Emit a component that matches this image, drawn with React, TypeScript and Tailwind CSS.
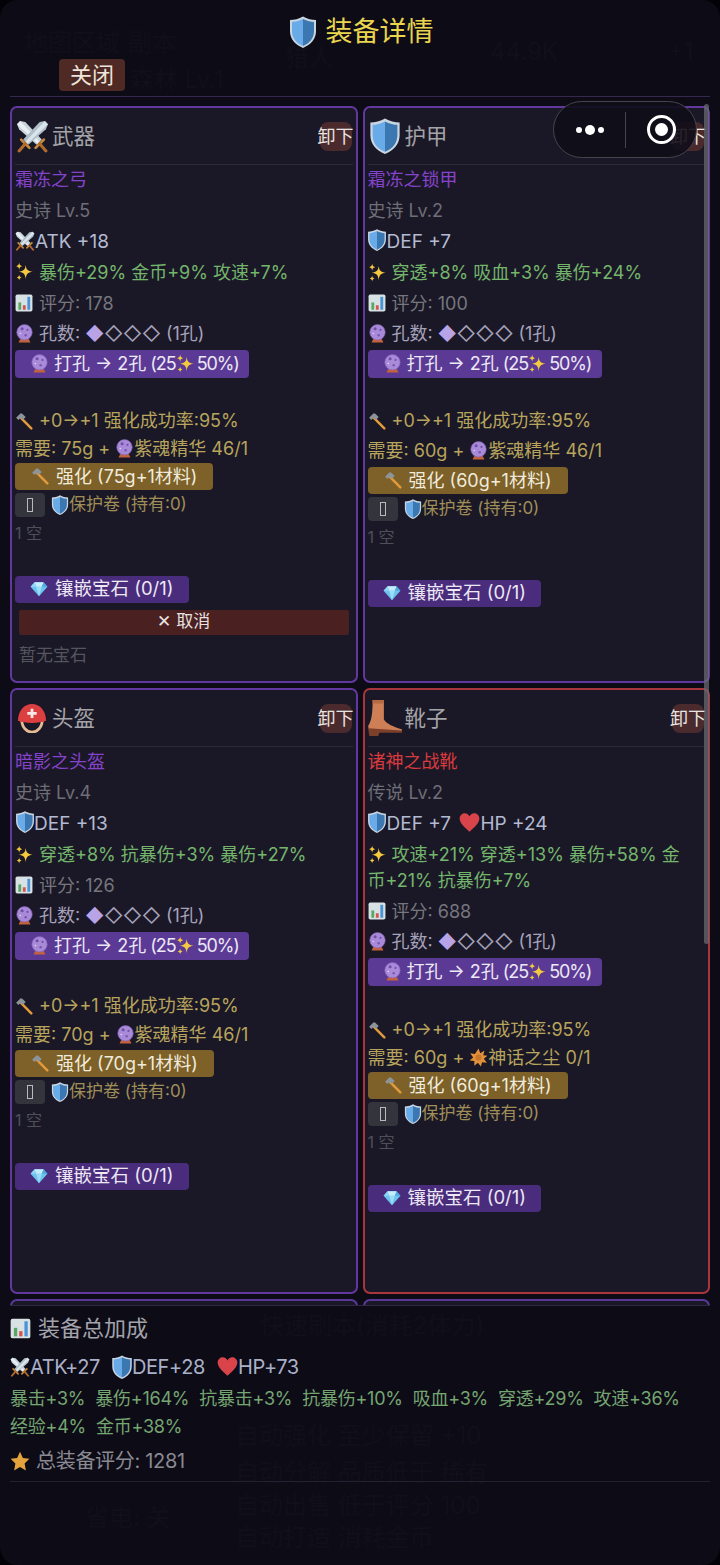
import React from "react";

type IP = { s?: number; className?: string };
const box = "inline-block align-[-0.15em] shrink-0";

const Swords = ({ s = 20, className = "" }: IP) => (
  <svg width={s} height={s} viewBox="0 0 32 32" className={`${box} ${className}`}>
    <path d="M1 4 L4 1 L9 2 L25 19 L20 24 L3 9 Z" fill="#c6d3dc" />
    <path d="M1 4 L4 1 L23 21 L21 23 Z" fill="#e8eef2" />
    <path d="M31 4 L28 1 L23 2 L7 19 L12 24 L29 9 Z" fill="#aebfca" />
    <path d="M31 4 L28 1 L9 21 L11 23 Z" fill="#dbe4ea" />
    <path d="M5 19 L13 27" stroke="#c98a3c" strokeWidth="2.6" strokeLinecap="round" />
    <path d="M27 19 L19 27" stroke="#c98a3c" strokeWidth="2.6" strokeLinecap="round" />
    <path d="M9 23 L3 30" stroke="#b06a2b" strokeWidth="3" strokeLinecap="round" />
    <path d="M23 23 L29 30" stroke="#b06a2b" strokeWidth="3" strokeLinecap="round" />
  </svg>
);
const Shield = ({ s = 20, className = "" }: IP) => (
  <svg width={s} height={s} viewBox="0 0 32 32" className={`${box} ${className}`}>
    <path d="M16 0.5 C20 3 25 4 29 4 L29 15 C29 23 24 28.5 16 32 C8 28.5 3 23 3 15 L3 4 C7 4 12 3 16 0.5 Z" fill="#c9d6e2" />
    <path d="M16 3 C12 5 8 6 5 6 L5 15 C5 22 9 27 16 30 Z" fill="#69aae8" />
    <path d="M16 3 C20 5 24 6 27 6 L27 15 C27 22 23 27 16 30 Z" fill="#3b77b0" />
  </svg>
);
const Sparkle = ({ s = 20, className = "" }: IP) => (
  <svg width={s} height={s} viewBox="0 0 32 32" className={`${box} ${className}`}>
    <path d="M18 5 C19 13 21 15 30 16.5 C21 18 19 20 18 29 C17 20 15 18 6 16.5 C15 15 17 13 18 5 Z" fill="#f5c93f" />
    <path d="M7 1 C7.6 5 8.5 6 12 7 C8.5 8 7.6 9 7 13 C6.4 9 5.5 8 2 7 C5.5 6 6.4 5 7 1 Z" fill="#f5c93f" />
    <path d="M7 21 C7.5 24 8.2 25 11 26 C8.2 27 7.5 28 7 31 C6.5 28 5.8 27 3 26 C5.8 25 6.5 24 7 21 Z" fill="#f5c93f" />
  </svg>
);
const Chart = ({ s = 20, className = "" }: IP) => (
  <svg width={s} height={s} viewBox="0 0 32 32" className={`${box} ${className}`}>
    <rect x="1" y="1" width="30" height="30" rx="3" fill="#d8e2e4" />
    <rect x="6" y="15" width="5" height="13" fill="#5aa765" />
    <rect x="14" y="20" width="5" height="8" fill="#d6544e" />
    <rect x="22" y="5" width="5" height="23" fill="#4a93d8" />
  </svg>
);
const Ball = ({ s = 20, className = "" }: IP) => (
  <svg width={s} height={s} viewBox="0 0 32 32" className={`${box} ${className}`}>
    <path d="M6 31 L26 31 L23 25 L9 25 Z" fill="#c4623a" />
    <circle cx="16" cy="14" r="13" fill="#a98ad8" />
    <circle cx="16" cy="14" r="13" fill="none" stroke="#7e5fb8" strokeWidth="1" />
    <circle cx="12" cy="8" r="2.6" fill="#6f4fa8" />
    <circle cx="21" cy="10" r="1.8" fill="#6f4fa8" />
    <circle cx="18" cy="19" r="2.2" fill="#7a5ab2" />
    <circle cx="9" cy="16" r="1.4" fill="#e0d4f2" />
  </svg>
);
const Hammer = ({ s = 20, className = "" }: IP) => (
  <svg width={s} height={s} viewBox="0 0 32 32" className={`${box} ${className}`}>
    <path d="M11 11 L29 29" stroke="#e39a3b" strokeWidth="4.4" strokeLinecap="round" />
    <path d="M2 10 L10 2 L13 3 L19 9 L14 14 L10 10 L6 14 Z" fill="#8b949b" />
  </svg>
);
const Gem = ({ s = 20, className = "" }: IP) => (
  <svg width={s} height={s} viewBox="0 0 32 32" className={`${box} ${className}`}>
    <path d="M8 4 L24 4 L31 12 L16 29 L1 12 Z" fill="#6cc3ef" />
    <path d="M8 4 L24 4 L21 12 L11 12 Z" fill="#c6ecfb" />
    <path d="M11 12 L21 12 L16 29 Z" fill="#9bdcf6" />
    <path d="M1 12 L8 4 L11 12 Z" fill="#90d6f5" />
    <path d="M31 12 L24 4 L21 12 Z" fill="#4fa9de" />
  </svg>
);
const Heart = ({ s = 20, className = "" }: IP) => (
  <svg width={s} height={s} viewBox="0 0 32 32" className={`${box} ${className}`}>
    <path d="M16 30 C8 23 1 17 1 10 C1 5 5 2 9 2 C12 2 15 4 16 7 C17 4 20 2 23 2 C27 2 31 5 31 10 C31 17 24 23 16 30 Z" fill="#d9434a" />
  </svg>
);
const Star = ({ s = 20, className = "" }: IP) => (
  <svg width={s} height={s} viewBox="0 0 32 32" className={`${box} ${className}`}>
    <path d="M16 1 L20.6 11 L31 12.4 L23.4 19.8 L25.4 31 L16 25.4 L6.6 31 L8.6 19.8 L1 12.4 L11.4 11 Z" fill="#e3a23c" />
  </svg>
);
const Burst = ({ s = 20, className = "" }: IP) => (
  <svg width={s} height={s} viewBox="0 0 32 32" className={`${box} ${className}`}>
    <path d="M16 1 L19 9 L26 4 L24 12 L31 13 L25 18 L30 25 L22 24 L20 31 L15 25 L9 30 L9 22 L1 21 L7 16 L2 9 L10 10 Z" fill="#e2913a" />
    <circle cx="16" cy="16" r="5" fill="#c9752a" />
  </svg>
);
const Helmet = ({ s = 30, className = "" }: IP) => (
  <svg width={s} height={s} viewBox="0 0 32 32" className={`${box} ${className}`}>
    <path d="M5 17 C5 26 10 31 16 31 C22 31 27 26 27 17" fill="none" stroke="#e3bb94" strokeWidth="3" />
    <path d="M1 19 C1 8 8 1 16 1 C24 1 31 8 31 19 C24 22 8 22 1 19 Z" fill="#dc3f3f" />
    <path d="M14.5 6 H17.5 V9.5 H21 V12.5 H17.5 V16 H14.5 V12.5 H11 V9.5 H14.5 Z" fill="#f7e9e6" />
  </svg>
);
const Boot = ({ s = 36, className = "" }: IP) => (
  <svg width={s} height={s} viewBox="0 0 32 32" className={`${box} ${className}`}>
    <path d="M5 0 L15 0 L15 17 C17 21 24 24 31 26 L31 28 L2 28 L1 23 C4 19 5 12 5 0 Z" fill="#cf7f56" />
    <path d="M5 0 L15 0 L15 3 L5 3 Z" fill="#b56a44" />
    <path d="M1 25 L31 27 L31 29 L11 29 L10 32 L2 32 Z" fill="#7c3f2a" />
  </svg>
);

const Tofu = () => (
  <span className="w-[30px] h-[24px] rounded-[4px] bg-[#34343c] flex items-center justify-center">
    <span className="w-[6px] h-[14px] border border-[#b9b9bd]" />
  </span>
);

const rowCls = "leading-[26px] py-[2.4px] text-[18px]";

type CardProps = {
  icon: React.ReactNode;
  slot: string;
  name: string;
  nameCls: string;
  rare: string;
  stats: React.ReactNode;
  affix: string;
  score: number;
  gap: string;
  need: React.ReactNode;
  needCls: string;
  price: string;
  border: string;
  h: string;
  pick?: boolean;
};

const Card = ({ icon, slot, name, nameCls, rare, stats, affix, score, gap, need, needCls, price, border, h, pick }: CardProps) => (
  <div className={`${h} ${border} border-2 rounded-[7px] bg-[#1a1826] px-[3px] flex flex-col overflow-hidden`}>
    <div className="h-[57px] shrink-0 border-b border-[#2c2a38] flex items-center justify-between">
      <div className="flex items-center gap-[3px]">
        <span className="w-[34px] flex justify-center">{icon}</span>
        <span className="text-[21.5px] text-[#a3a3a8]">{slot}</span>
      </div>
      <span className="w-[32px] h-[29px] rounded-[8px] bg-[#4a2a2c] text-[18px] text-[#e8e4e2] flex items-center justify-center whitespace-nowrap mr-[1px]">卸下</span>
    </div>
    <div className={`${rowCls} text-[17px] ${nameCls}`}>{name}</div>
    <div className={`${rowCls} text-[#6e6e76]`}>{rare}</div>
    <div className={`${rowCls} text-[#b3bad2] text-[19px]`}>{stats}</div>
    <div className={`${rowCls} text-[#74b56c] pr-[24px]`}><Sparkle s={19} className="mr-[5px]" />{affix}</div>
    <div className={`${rowCls} text-[#76767e]`}><Chart s={18} className="mr-[6px]" />评分: {score}</div>
    <div className={`${rowCls} text-[#a6a2bb]`}>
      <Ball s={19} className="mr-[5px]" />孔数: <span className="text-[#b7a3e6]">◆</span>◇◇◇ (1孔)
    </div>
    <div className="self-start w-[234px] h-[28px] pl-[15px] rounded-[4px] bg-[#5b3a96] text-[18px] text-[#ece8f4] flex items-center whitespace-nowrap">
      <Ball s={19} className="mr-[5px]" />打孔 → 2孔 <span className="ml-[4px] tracking-[-1px]">(25</span><Sparkle s={19} className="mr-[2px]" /><span className="tracking-[-1.2px]">50%)</span>
    </div>
    <div className={`${gap} h-[28px] flex items-center whitespace-nowrap text-[18px] text-[#b8a45c]`}><Hammer s={18} className="mr-[6px]" />+0→+1 强化成功率:95%</div>
    <div className={`${needCls} text-[18px] text-[#b8a45c] flex items-center whitespace-nowrap`}>{need}</div>
    <div className="self-start h-[27px] px-[16px] rounded-[4px] bg-[#7d6128] text-[18px] text-[#f0ebdd] flex items-center whitespace-nowrap">
      <Hammer s={18} className="mr-[7px]" />强化 ({price}+1材料)
    </div>
    <div className="mt-[3px] h-[24px] flex items-center text-[17px] text-[#a08e58] whitespace-nowrap">
      <Tofu />
      <Shield s={20} className="ml-[5px] -mr-[1px]" />保护卷 (持有:0)
    </div>
    <div className="mt-[2px] h-[28px] leading-[28px] text-[16px] text-[#4f4f58]">1 空</div>
    <div className="mt-[29px] self-start h-[27px] px-[15px] rounded-[4px] bg-[#4a2c7c] text-[18.5px] text-[#ece8f4] flex items-center whitespace-nowrap">
      <Gem s={18} className="mr-[7px]" />镶嵌宝石 (0/1)
    </div>
    {pick && (
      <>
        <div className="mt-[7px] mx-[4px] h-[25px] bg-[#4a2020] text-[17px] text-[#e8e2e0] flex items-center justify-center rounded-[2px]">✕ 取消</div>
        <div className="mt-[7px] mx-[4px] leading-[26px] text-[17px] text-[#55555e]">暂无宝石</div>
      </>
    )}
  </div>
);

const Need = ({ price, icon, mat }: { price: string; icon: React.ReactNode; mat: string }) => (
  <>
    需要: {price} +&nbsp;{icon}{mat}
  </>
);

const ghost = "absolute text-[#110f1b] text-[24px] whitespace-nowrap";

export default function App() {
  const font = { fontFamily: '"Inter", "Noto Sans CJK SC", sans-serif' };
  return (
    <div className="w-[720px] h-[1565px] bg-[#030206] overflow-hidden" style={font}>
      <div className="relative w-[720px] h-[1565px] rounded-[18px] bg-[#0d0b16] overflow-hidden flex flex-col">
        {/* dimmed page behind the sheet */}
        <div className={`${ghost} left-[24px] top-[25px]`}>地图区域</div>
        <div className={`${ghost} left-[128px] top-[25px]`}>副本</div>
        <div className={`${ghost} left-[285px] top-[40px]`}>猎人</div>
        <div className={`${ghost} left-[490px] top-[34px]`}>44.9K</div>
        <div className={`${ghost} left-[668px] top-[34px]`}>+1</div>
        <div className={`${ghost} left-[130px] top-[62px] text-[20px]`}>森林 Lv.1</div>
        <div className={`${ghost} left-[260px] top-[1308px]`}>快速刷本(消耗2体力)</div>
        <div className={`${ghost} left-[235px] top-[1418px]`}>自动强化 至少保留 +10</div>
        <div className={`${ghost} left-[235px] top-[1455px]`}>自动分解 品质低于 稀有</div>
        <div className={`${ghost} left-[235px] top-[1488px]`}>自动出售 低于评分 100</div>
        <div className={`${ghost} left-[235px] top-[1520px]`}>自动打造 消耗金币</div>
        <div className={`${ghost} left-[85px] top-[1500px]`}>省电: 关</div>

        <div className="relative h-[97px] shrink-0 border-b border-[#352a4e] pt-[16px] mx-[10px]">
          <div className="h-[32px] flex items-center justify-center gap-[7px]">
            <Shield s={32} />
            <span className="text-[27px] text-[#e9d54e]">装备详情</span>
          </div>
          <div className="mt-[11px] ml-[49px] w-[66px] h-[32px] rounded-[4px] bg-[#4f2a24] text-[22px] text-[#eee6dc] flex items-center justify-center">关闭</div>
        </div>

        <div className="relative mt-[9px] mx-[10px] h-[1199px] shrink-0 overflow-hidden">
          <div className="grid grid-cols-2 gap-x-[5px] gap-y-[5px]">
            <Card pick h="h-[577px]" border="border-[#6238a0]" icon={<Swords s={33} />} slot="武器" name="霜冻之弓" nameCls="text-[#8543cc]" rare="史诗 Lv.5"
              stats={<><Swords s={20} />ATK +18</>} affix="暴伤+29% 金币+9% 攻速+7%" score={178} gap="mt-[29px]" needCls="h-[28px]"
              need={<Need price="75g" icon={<Ball s={19} />} mat="紫魂精华 46/1" />} price="75g" />
            <Card h="h-[577px]" border="border-[#6238a0]" icon={<Shield s={36} />} slot="护甲" name="霜冻之锁甲" nameCls="text-[#8543cc]" rare="史诗 Lv.2"
              stats={<><Shield s={22} className="-mx-[1.5px]" />DEF +7</>} affix="穿透+8% 吸血+3% 暴伤+24%" score={100} gap="mt-[29px]" needCls="h-[32px]"
              need={<Need price="60g" icon={<Ball s={19} />} mat="紫魂精华 46/1" />} price="60g" />
            <Card h="h-[606px]" border="border-[#6238a0]" icon={<Helmet s={30} />} slot="头盔" name="暗影之头盔" nameCls="text-[#8543cc]" rare="史诗 Lv.4"
              stats={<><Shield s={22} className="-mx-[1.5px]" />DEF +13</>} affix="穿透+8% 抗暴伤+3% 暴伤+27%" score={126} gap="mt-[32px]" needCls="h-[30px]"
              need={<Need price="70g" icon={<Ball s={19} />} mat="紫魂精华 46/1" />} price="70g" />
            <Card h="h-[606px]" border="border-[#a8363c]" icon={<Boot s={36} />} slot="靴子" name="诸神之战靴" nameCls="text-[#d93a3e]" rare="传说 Lv.2"
              stats={<><Shield s={22} className="-mx-[1.5px]" />DEF +7 <Heart s={21} className="ml-[3px]" />HP +24</>} affix="攻速+21% 穿透+13% 暴伤+58% 金币+21% 抗暴伤+7%" score={688} gap="mt-[30px]" needCls="h-[28px]"
              need={<Need price="60g" icon={<Burst s={19} />} mat="神话之尘 0/1" />} price="60g" />
            <div className="h-[40px] border-2 border-[#5a389a] rounded-[7px] bg-[#1a1826]" />
            <div className="h-[40px] border-2 border-[#5a389a] rounded-[7px] bg-[#1a1826]" />
          </div>
        </div>

        <div className="relative mx-[10px] border-t border-[#2e2842]">
          <div className="h-[44px] flex items-center gap-[7px] text-[22px] text-[#a3a3ab]">
            <Chart s={21} />装备总加成
          </div>
          <div className="h-[33px] flex items-center text-[20px] text-[#a9b0c8] whitespace-nowrap tracking-[-0.4px]">
            <Swords s={20} />ATK+27<Shield s={24} className="ml-[10px] -mr-[2px]" />DEF+28<Heart s={21} className="ml-[12px]" />HP+73
          </div>
          <div className="mt-[2px] w-[700px] flex flex-wrap gap-x-[10px] text-[18px] leading-[28px] tracking-[-0.25px] text-[#75a571]">
            {["暴击+3%", "暴伤+164%", "抗暴击+3%", "抗暴伤+10%", "吸血+3%", "穿透+29%", "攻速+36%", "经验+4%", "金币+38%"].map((t) => (
              <span key={t}>{t}</span>
            ))}
          </div>
          <div className="h-[36px] mt-[2px] flex items-center gap-[6px] text-[20px] text-[#8a8a92] tracking-[-0.3px]">
            <Star s={20} />总装备评分: 1281
          </div>
          <div className="mt-[2px] border-t border-[#24202f]" />
        </div>

        {/* scrollbar and the host app's capsule float over the sheet */}
        <div className="absolute left-[704px] top-[104px] w-[5px] h-[840px] rounded-full bg-[#6e6e76]/70" />
        <div className="absolute left-[553px] top-[101px] w-[144px] h-[57px] rounded-full border border-[#45434c] bg-[#0f0d17]/90 flex items-center">
          <div className="w-[71px] flex items-center justify-center gap-[3px]">
            <span className="w-[6px] h-[6px] rounded-full bg-white" />
            <span className="w-[10px] h-[10px] rounded-full bg-white" />
            <span className="w-[6px] h-[6px] rounded-full bg-white" />
          </div>
          <div className="w-px h-[36px] bg-[#45434c]" />
          <div className="ml-[21px] w-[29px] h-[29px] rounded-full border-[3px] border-white flex items-center justify-center">
            <span className="w-[13px] h-[13px] rounded-full bg-white" />
          </div>
        </div>
      </div>
    </div>
  );
}
